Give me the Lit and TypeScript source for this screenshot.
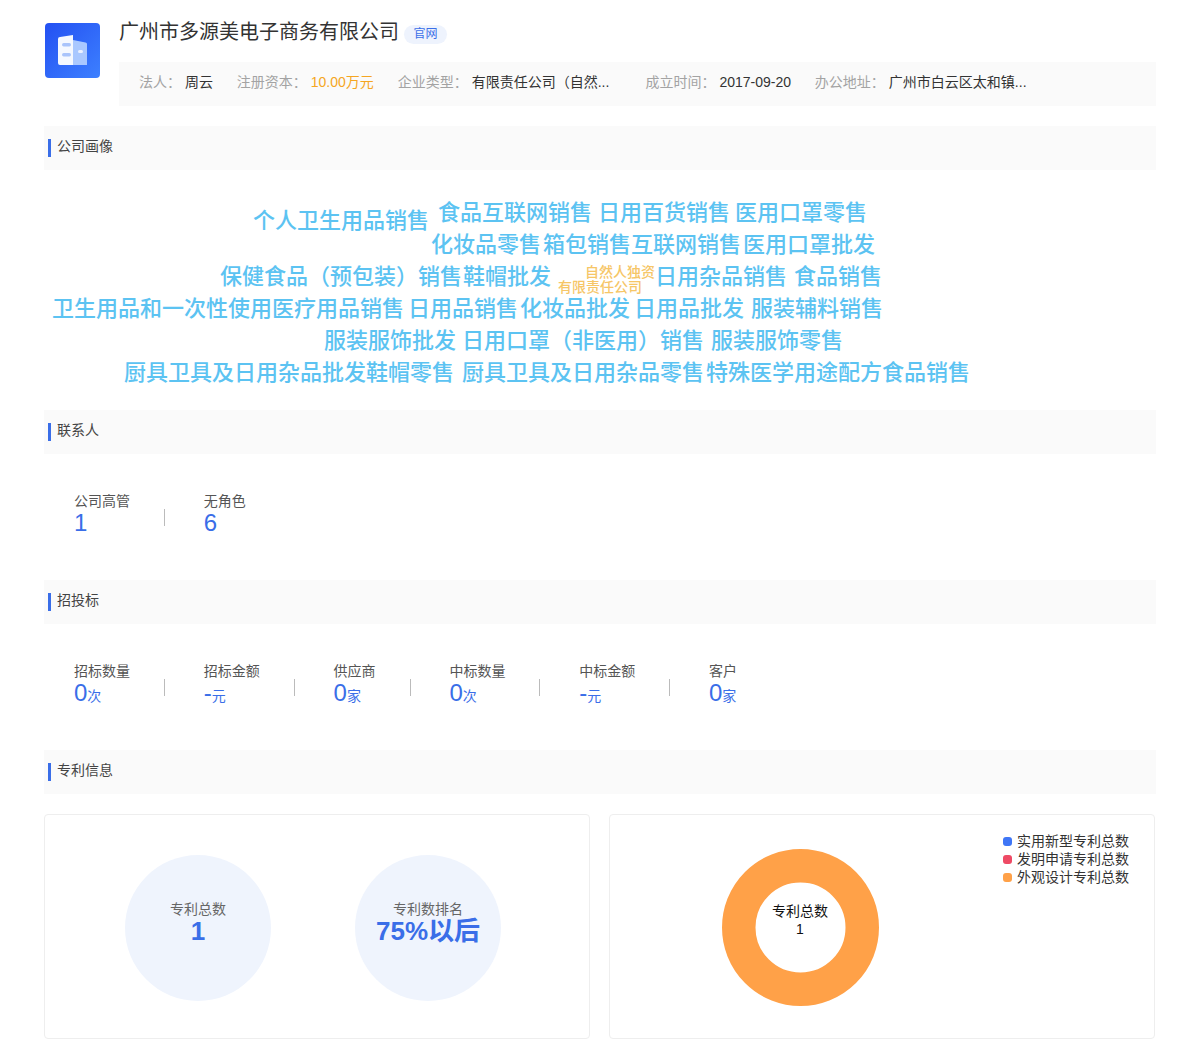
import { LitElement, css, html, unsafeCSS } from 'lit';
import { customElement } from 'lit/decorators.js';

const FONT = unsafeCSS('"Liberation Sans", "Noto Sans CJK SC", sans-serif');

// word cloud: [text, x, centre y, size, colour]
const BLUE = '#5cc3f2';
const GOLD = '#f6c667';
const words: [string, number, number, number, string][] = [
  ['个人卫生用品销售', 253, 51, 22, BLUE],
  ['食品互联网销售', 438, 43, 22, BLUE],
  ['日用百货销售', 598, 43, 22, BLUE],
  ['医用口罩零售', 735, 43, 22, BLUE],
  ['化妆品零售', 431, 75, 22, BLUE],
  ['箱包销售', 543, 75, 22, BLUE],
  ['互联网销售', 631, 75, 22, BLUE],
  ['医用口罩批发', 743, 75, 22, BLUE],
  ['保健食品（预包装）销售', 220, 107, 22, BLUE],
  ['鞋帽批发', 463, 107, 22, BLUE],
  ['自然人独资', 585, 102, 14, GOLD],
  ['有限责任公司', 558, 117, 14, GOLD],
  ['日用杂品销售', 655, 107, 22, BLUE],
  ['食品销售', 794, 107, 22, BLUE],
  ['卫生用品和一次性使用医疗用品销售', 52, 139, 22, BLUE],
  ['日用品销售', 408, 139, 22, BLUE],
  ['化妆品批发', 520, 139, 22, BLUE],
  ['日用品批发', 634, 139, 22, BLUE],
  ['服装辅料销售', 751, 139, 22, BLUE],
  ['服装服饰批发', 324, 171, 22, BLUE],
  ['日用口罩（非医用）销售', 462, 171, 22, BLUE],
  ['服装服饰零售', 711, 171, 22, BLUE],
  ['厨具卫具及日用杂品批发', 124, 203, 22, BLUE],
  ['鞋帽零售', 366, 203, 22, BLUE],
  ['厨具卫具及日用杂品零售', 462, 203, 22, BLUE],
  ['特殊医学用途配方食品销售', 706, 203, 22, BLUE],
];

const contacts = [
  { label: '公司高管', value: '1', unit: '' },
  { label: '无角色', value: '6', unit: '' },
];

const bids = [
  { label: '招标数量', value: '0', unit: '次' },
  { label: '招标金额', value: '-', unit: '元' },
  { label: '供应商', value: '0', unit: '家' },
  { label: '中标数量', value: '0', unit: '次' },
  { label: '中标金额', value: '-', unit: '元' },
  { label: '客户', value: '0', unit: '家' },
];

const legend = [
  { name: '实用新型专利总数', color: '#3f76f6' },
  { name: '发明申请专利总数', color: '#ee4a65' },
  { name: '外观设计专利总数', color: '#ffa148' },
];

@customElement('app-root')
export class AppRoot extends LitElement {
  static styles = css`
    :host {
      display: block;
      font-family: ${FONT};
      color: #333;
      background: #fff;
      height: 1061px;
      box-sizing: border-box;
      padding: 0 44px;
    }
    .head {
      display: flex;
      height: 126px;
    }
    .logo {
      width: 56px;
      height: 56px;
      margin: 22px 19px 0 0;
      flex: none;
    }
    .head-main {
      flex: 1;
      min-width: 0;
    }
    .title-row {
      display: flex;
      align-items: flex-start;
      height: 62px;
    }
    .title {
      font-size: 20px;
      line-height: 28px;
      margin-top: 18px;
      color: #333;
    }
    .tag {
      margin: 25px 0 0 5px;
      width: 43px;
      height: 19px;
      border-radius: 10px;
      background: #eef3fd;
      color: #3b6fe8;
      font-size: 12px;
      line-height: 19px;
      text-align: center;
    }
    .info {
      display: flex;
      align-items: flex-start;
      gap: 23.8px;
      height: 44px;
      box-sizing: border-box;
      padding: 10px 0 0 20px;
      background: #fafafa;
      font-size: 14px;
      line-height: 20px;
    }
    .info-item {
      display: flex;
      white-space: nowrap;
    }
    .info-label {
      color: #a3a3a3;
      margin-right: 4px;
    }
    .info-value {
      color: #333;
    }
    .info-value.money {
      color: #f5a623;
    }
    .info-value.clip {
      width: 150px;
    }
    .section {
      display: flex;
      align-items: center;
      height: 44px;
      padding-left: 4px;
      background: #fafafa;
      font-size: 14px;
      color: #444;
    }
    .section i {
      width: 3px;
      height: 18px;
      margin: 0 6px 0 0;
      background: #3a6ee8;
    }
    .section span {
      margin-top: -7px;
    }
    .cloud {
      position: relative;
      height: 240px;
    }
    .word {
      position: absolute;
      line-height: 1;
      white-space: nowrap;
      font-weight: 500;
      transform: translateY(-50%);
    }
    .stats {
      display: flex;
      height: 126px;
      box-sizing: border-box;
      padding: 39px 0 0 30px;
    }
    .stat {
      display: flex;
    }
    .stat-label {
      font-size: 14px;
      line-height: 16px;
      color: #555;
      white-space: nowrap;
    }
    .stat-value {
      font-size: 24px;
      line-height: 26px;
      margin-top: 1px;
      color: #3a6ee8;
    }
    .stat-unit {
      font-size: 14px;
    }
    .stat-sep {
      width: 1px;
      height: 17px;
      margin: 16px 38.8px 0 34px;
      background: #bbb;
    }
    .cards {
      display: flex;
      gap: 19px;
      margin-top: 20px;
    }
    .card {
      position: relative;
      box-sizing: border-box;
      width: 546px;
      height: 225px;
      border: 1px solid #eee;
      border-radius: 4px;
    }
    .circles {
      display: flex;
      gap: 84px;
      padding: 40px 0 0 80px;
    }
    .circle {
      width: 146px;
      height: 146px;
      box-sizing: border-box;
      padding-top: 46px;
      border-radius: 50%;
      background: #eff4fd;
      text-align: center;
    }
    .circle-label {
      font-size: 14px;
      line-height: 16px;
      color: #666;
    }
    .circle-value {
      font-size: 26px;
      line-height: 28px;
      font-weight: 700;
      color: #3a6ee8;
    }
    .donut {
      display: block;
      width: 160px;
      height: 160px;
      margin: 33px 0 0 110px;
    }
    .donut-text {
      position: absolute;
      left: 110px;
      top: 87px;
      width: 160px;
      text-align: center;
      font-size: 14px;
      line-height: 18px;
      color: #111;
    }
    .legend {
      position: absolute;
      top: 17px;
      right: 25px;
      font-size: 14px;
      line-height: 18px;
      color: #333;
    }
    .legend-row {
      display: flex;
      align-items: center;
      gap: 5px;
    }
    .legend-row i {
      width: 9px;
      height: 9px;
      border-radius: 3px;
    }
  `;

  renderStats(items: { label: string; value: string; unit: string }[]) {
    return html`<div class="stats">
      ${items.map(
        (s, i) => html`<div class="stat">
          <div>
            <div class="stat-label">${s.label}</div>
            <div class="stat-value">${s.value}<span class="stat-unit">${s.unit}</span></div>
          </div>
          ${i < items.length - 1 ? html`<div class="stat-sep"></div>` : ''}
        </div>`
      )}
    </div>`;
  }

  render() {
    return html`
      <div class="head">
        <svg class="logo" viewBox="0 0 56 56">
          <defs>
            <linearGradient id="lg" x1="0" y1="0" x2="1" y2="1">
              <stop offset="0" stop-color="#2350f2" />
              <stop offset="1" stop-color="#3d80ff" />
            </linearGradient>
          </defs>
          <rect x="1" y="1" width="55" height="55" rx="4" fill="url(#lg)" />
          <path d="M29 18l12.500 2.500a1.500 1.500 0 0 1 1.500 1.500v21h-14z" fill="#a9c8ff" />
          <path d="M14 17a2 2 0 0 1 2-2l13-2v30H16a2 2 0 0 1-2-2z" fill="#f4f8ff" />
          <rect x="18" y="21" width="9" height="3.500" rx="1.700" fill="#a9c4fb" />
          <rect x="18" y="31" width="9" height="3.500" rx="1.700" fill="#a9c4fb" />
          <rect x="34" y="28" width="5" height="3" rx="1.500" fill="#eaf1ff" />
        </svg>
        <div class="head-main">
          <div class="title-row">
            <div class="title">广州市多源美电子商务有限公司</div>
            <div class="tag">官网</div>
          </div>
          <div class="info">
            <div class="info-item"><span class="info-label">法人：</span><span class="info-value">周云</span></div>
            <div class="info-item"><span class="info-label">注册资本：</span><span class="info-value money">10.00万元</span></div>
            <div class="info-item"><span class="info-label">企业类型：</span><span class="info-value clip">有限责任公司（自然...</span></div>
            <div class="info-item"><span class="info-label">成立时间：</span><span class="info-value">2017-09-20</span></div>
            <div class="info-item"><span class="info-label">办公地址：</span><span class="info-value">广州市白云区太和镇...</span></div>
          </div>
        </div>
      </div>

      <div class="section"><i></i><span>公司画像</span></div>
      <div class="cloud">
        ${words.map(
          ([t, x, y, size, color]) =>
            html`<span class="word" style="left:${x - 44}px;top:${y}px;font-size:${size}px;color:${color}">${t}</span>`
        )}
      </div>

      <div class="section"><i></i><span>联系人</span></div>
      ${this.renderStats(contacts)}

      <div class="section"><i></i><span>招投标</span></div>
      ${this.renderStats(bids)}

      <div class="section"><i></i><span>专利信息</span></div>
      <div class="cards">
        <div class="card">
          <div class="circles">
            <div class="circle">
              <div class="circle-label">专利总数</div>
              <div class="circle-value">1</div>
            </div>
            <div class="circle">
              <div class="circle-label">专利数排名</div>
              <div class="circle-value">75%以后</div>
            </div>
          </div>
        </div>
        <div class="card">
          <svg class="donut" viewBox="0 0 160 160">
            <circle cx="80.500" cy="79.500" r="61.750" fill="none" stroke="#ffa148" stroke-width="33.500" />
          </svg>
          <div class="donut-text">专利总数<br />1</div>
          <div class="legend">
            ${legend.map(
              (l) => html`<div class="legend-row"><i style="background:${l.color}"></i>${l.name}</div>`
            )}
          </div>
        </div>
      </div>
    `;
  }
}
